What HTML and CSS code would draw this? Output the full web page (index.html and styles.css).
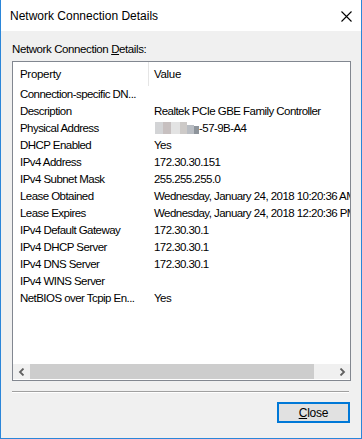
FILE: index.html
```html
<!DOCTYPE html>
<html lang="en">
<head>
  <meta charset="UTF-8" />
  <title>Network Connection Details</title>
  <link rel="stylesheet" href="styles.css">
</head>
<body>
  <div class="window">
    <div class="titlebar">
      <span class="title">Network Connection Details</span>
      <svg class="close-x" width="11" height="11" viewBox="0 0 11 11">
        <path d="M0.5 0.5 L10.5 10.5 M10.5 0.5 L0.5 10.5" stroke="#000" stroke-width="1.1" fill="none"/>
      </svg>
    </div>
    <div class="content">
      <div class="label">Network Connection <u>D</u>etails:</div>
      <div class="listbox">
        <div class="list-head">
          <div class="col-prop">Property</div>
          <div class="col-val head-val">Value</div>
        </div>
        <div class="rows">
          <div class="row"><div class="col-prop">Connection-specific DN...</div><div class="col-val"></div></div>
          <div class="row"><div class="col-prop">Description</div><div class="col-val">Realtek PCIe GBE Family Controller</div></div>
          <div class="row"><div class="col-prop">Physical Address</div><div class="col-val">
            <span class="blur"><i class="b1"></i><i class="b2"></i><i class="b3"></i><i class="b4"></i><i class="b5"></i><i class="b6"></i></span>-57-9B-A4</div></div>
          <div class="row"><div class="col-prop">DHCP Enabled</div><div class="col-val">Yes</div></div>
          <div class="row"><div class="col-prop">IPv4 Address</div><div class="col-val">172.30.30.151</div></div>
          <div class="row"><div class="col-prop">IPv4 Subnet Mask</div><div class="col-val">255.255.255.0</div></div>
          <div class="row"><div class="col-prop">Lease Obtained</div><div class="col-val">Wednesday, January 24, 2018 10:20:36 AM</div></div>
          <div class="row"><div class="col-prop">Lease Expires</div><div class="col-val">Wednesday, January 24, 2018 12:20:36 PM</div></div>
          <div class="row"><div class="col-prop">IPv4 Default Gateway</div><div class="col-val">172.30.30.1</div></div>
          <div class="row"><div class="col-prop">IPv4 DHCP Server</div><div class="col-val">172.30.30.1</div></div>
          <div class="row"><div class="col-prop">IPv4 DNS Server</div><div class="col-val">172.30.30.1</div></div>
          <div class="row"><div class="col-prop">IPv4 WINS Server</div><div class="col-val"></div></div>
          <div class="row"><div class="col-prop">NetBIOS over Tcpip En...</div><div class="col-val">Yes</div></div>
        </div>
        <div class="hscroll">
          <div class="arrow">
            <svg width="8" height="8" viewBox="0 0 8 8"><path d="M5.5 0.5 L2 4 L5.5 7.5" stroke="#606060" stroke-width="1.8" fill="none"/></svg>
          </div>
          <div class="track"><div class="thumb"></div></div>
          <div class="arrow">
            <svg width="8" height="8" viewBox="0 0 8 8"><path d="M2.5 0.5 L6 4 L2.5 7.5" stroke="#606060" stroke-width="1.8" fill="none"/></svg>
          </div>
        </div>
      </div>
      <div class="separator"></div>
      <div class="buttons">
        <button class="btn-close"><u>C</u>lose</button>
      </div>
    </div>
  </div>
</body>
</html>
```

FILE: styles.css
```css
body {
  margin: 0;
  font-family: "Liberation Sans", Arial, sans-serif;
  font-size: 11.5px;
  color: #000;
  background: #fff;
}
.window {
  width: 362px;
  height: 439px;
  box-sizing: border-box;
  border: 1px solid #2b86d9;
  border-top: none;
  background: #f0f0f0;
  display: flex;
  flex-direction: column;
}
.titlebar {
  height: 31px;
  background: #fff;
  display: flex;
  align-items: center;
  justify-content: space-between;
  padding: 0 9px 0 9px;
  flex-shrink: 0;
}
.title {
  font-size: 12px;
  margin-top: 1px;
}
.close-x {
  margin-top: 1px;
}
.content {
  padding: 11px 11px 0 11px;
  display: flex;
  flex-direction: column;
}
.label {
  letter-spacing: -0.4px;
  height: 14px;
  line-height: 14px;
  margin-bottom: 5px;
}
.label u { text-underline-offset: 1px; }
.listbox {
  width: 339px;
  height: 320px;
  box-sizing: border-box;
  border: 1px solid #828790;
  background: #fff;
  display: flex;
  flex-direction: column;
  overflow: hidden;
}
.list-head {
  display: flex;
  height: 24px;
  align-items: center;
  flex-shrink: 0;
  letter-spacing: -0.3px;
}
.col-prop {
  width: 135px;
  box-sizing: border-box;
  padding-left: 7px;
  white-space: nowrap;
  overflow: hidden;
  flex-shrink: 0;
}
.col-val {
  padding-left: 6px;
  white-space: nowrap;
  flex-shrink: 0;
}
.head-val {
  border-left: 1px solid #e5e5e5;
  height: 24px;
  line-height: 25px;
  padding-left: 5px;
}
.list-head .col-prop {
  line-height: 25px;
}
.rows {
  flex: 1;
  letter-spacing: -0.55px;
}
.row {
  display: flex;
  height: 17px;
  line-height: 17px;
}
.blur {
  display: inline-flex;
  vertical-align: -2px;
  margin-left: 1px;
}
.blur i {
  display: inline-block;
  width: 8px;
  height: 12px;
}
.blur .b1 { background: #d3d4d6; }
.blur .b2 { background: #c7c0c0; }
.blur .b3 { background: #e3e3e3; width: 9px; }
.blur .b4 { background: #cdcac8; width: 7px; }
.blur .b5 { background: #b9bdc3; width: 7px; height: 9px; margin-top: 3px; }
.blur .b6 { background: #8e949b; width: 5px; height: 8px; margin-top: 4px; }
.hscroll {
  height: 15px;
  display: flex;
  background: #f0f0f0;
  flex-shrink: 0;
  margin-bottom: 1px;
}
.arrow {
  width: 17px;
  display: flex;
  align-items: center;
  justify-content: center;
}
.track {
  flex: 1;
  display: flex;
}
.thumb {
  width: 284px;
  background: #cdcdcd;
}
.separator {
  margin-top: 10px;
  width: 337px;
  height: 1px;
  background: #a0a0a0;
  border-bottom: 1px solid #fff;
}
.buttons {
  display: flex;
  justify-content: flex-end;
  margin-top: 9px;
}
.btn-close {
  width: 73px;
  height: 21px;
  box-sizing: border-box;
  border: 2px solid #0078d7;
  background: #e1e1e1;
  font-family: "Liberation Sans", Arial, sans-serif;
  font-size: 12px;
  letter-spacing: -0.2px;
  padding: 0;
}
```
